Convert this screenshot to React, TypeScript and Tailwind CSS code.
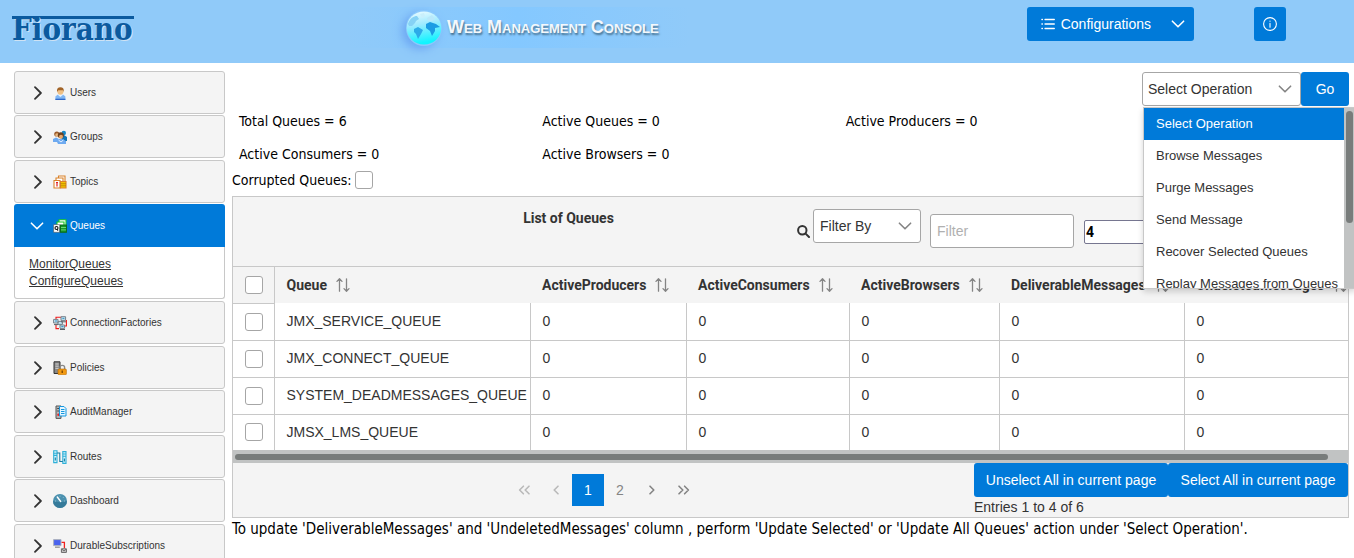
import React from "react";

type Glyph = { className?: string };

const ChevronDown = ({ className = "" }: Glyph) => (
  <svg viewBox="0 0 14 14" className={className} fill="none" stroke="currentColor" strokeWidth="1.6" strokeLinecap="round" strokeLinejoin="round" aria-hidden="true">
    <path d="M1.4 4.2 L7 9.8 L12.6 4.2" />
  </svg>
);

const ChevronRight = ({ className = "" }: Glyph) => (
  <svg viewBox="0 0 14 14" className={className} fill="none" stroke="currentColor" strokeWidth="1.8" strokeLinecap="round" strokeLinejoin="round" aria-hidden="true">
    <path d="M5 1.2 L10.9 7 L5 12.8" />
  </svg>
);

const ListIcon = () => (
  <svg viewBox="0 0 14 14" className="size-3.5" stroke="currentColor" strokeWidth="1.3" strokeLinecap="round" aria-hidden="true">
    <path d="M4 2.5H13.3M4 7H13.3M4 11.5H13.3M.9 2.5H1.4M.9 7H1.4M.9 11.5H1.4" />
  </svg>
);

const InfoIcon = () => (
  <svg viewBox="0 0 14 14" className="size-3.5" fill="none" stroke="currentColor" strokeWidth="1.1" strokeLinecap="round" aria-hidden="true">
    <circle cx="7" cy="7" r="6.4" />
    <path d="M7 6.4V10.2M7 4V4.2" />
  </svg>
);

const SortIcon = () => (
  <svg viewBox="0 0 14 14" className="size-3.5 shrink-0 text-[#848484]" fill="none" stroke="currentColor" strokeWidth="1.3" strokeLinecap="round" strokeLinejoin="round" aria-hidden="true">
    <path d="M3.5 13.2V.8M1 3.4L3.5 .8L6 3.4M10.5 .8V13.2M8 10.6L10.5 13.2L13 10.6" />
  </svg>
);

const SearchIcon = () => (
  <svg viewBox="0 0 13 13" className="size-[13px]" fill="none" stroke="#333" strokeWidth="2" strokeLinecap="round" aria-hidden="true">
    <circle cx="5.3" cy="5.3" r="4.2" />
    <path d="M8.6 8.6L12 12" />
  </svg>
);

const Angle = ({ double = false, flip = false }: { double?: boolean; flip?: boolean }) => (
  <svg viewBox="0 0 14 14" className={flip ? "size-3.5 rotate-180" : "size-3.5"} fill="none" stroke="currentColor" strokeWidth="1.6" strokeLinecap="round" strokeLinejoin="round" aria-hidden="true">
    <path d={double ? "M2 3.2L5.8 7L2 10.8M7.6 3.2L11.4 7L7.6 10.8" : "M5 3.2L8.8 7L5 10.8"} />
  </svg>
);

const Globe = () => (
  <svg viewBox="0 0 36 36" className="size-9 shrink-0" aria-hidden="true">
    <defs>
      <linearGradient id="sea" x1="0" y1="0" x2="0.2" y2="1">
        <stop offset="0" stopColor="#f2fdff" />
        <stop offset="0.45" stopColor="#9eeaff" />
        <stop offset="1" stopColor="#10f4ff" />
      </linearGradient>
    </defs>
    <ellipse cx="18" cy="18" rx="17.3" ry="16.5" fill="url(#sea)" />
    <path d="M2 14C4 8 8 6 11 6L13 9L10 11L9 13L6 16L3 16Z" fill="#86d2f5" />
    <path d="M8 19L12 17L17 20L15 24L12 29L10 24L8 22Z" fill="#2cabe8" />
    <path d="M20 14L24 12L30 14L34 17L29 18L29 21L26 26L24 21L20 18Z" fill="#1c9ce4" />
    <path d="M21 8L26 5L29 9L26 11L22 11Z" fill="#b9e8fa" />
    <path d="M14 4L18 3L19 6L16 8Z" fill="#c9effb" />
  </svg>
);

const UserIcon = () => (
  <g>
    <path d="M2.4 14V10.5L4.5 8.7H10.3L12.4 10.5V14Z" fill="#7fb6f4" />
    <path d="M2.4 12.7H12.4V14H2.4Z" fill="#2f68c8" />
    <path d="M5 9L7.4 11L9.8 9L9 8H5.8Z" fill="#e4f1ff" />
    <circle cx="7.4" cy="5.6" r="3.1" fill="#f0c084" />
    <path d="M4 6C3.7 2.6 5 1.2 7.4 1.2S11.2 2.6 10.8 6L10 4.2H5.3Z" fill="#a26428" />
  </g>
);
const GroupsIcon = () => (
  <g>
    <circle cx="10.8" cy="3" r="2.2" fill="#1587c8" />
    <path d="M8.5 10V6L11 5L14 7V11H10Z" fill="#1176b8" />
    <circle cx="3.8" cy="4" r="2.6" fill="#9a5a2a" />
    <circle cx="4" cy="5" r="1.8" fill="#eab981" />
    <circle cx="7.8" cy="5.2" r="3" fill="#6d421f" />
    <circle cx="8" cy="6.8" r="2" fill="#e8a86b" />
    <path d="M0 12V9L3 7.6L6 9L10 9.3L13 11V14H5L4 12Z" fill="#6eaaf0" />
    <path d="M5.5 10L8 12L10.4 10" stroke="#e0f0ff" fill="none" />
  </g>
);
const TopicsIcon = () => (
  <g fill="#fff" stroke="#d9822b" strokeWidth="1.1">
    <path d="M5.5 1H12V7H5.5Z" />
    <path d="M3 3H10V9H3Z" />
    <path d="M1 5.5H7V13H1Z" />
    <path d="M7.5 6.5H13V13H7.5Z" fill="#f5c400" />
    <path d="M7.5 8.7H13M7.5 10.8H13" stroke="#b07800" strokeWidth=".7" />
    <path d="M4 7V11.5M3 7.5H5" stroke="#e02020" strokeWidth="1.2" />
  </g>
);
const QueuesIcon = () => (
  <g fill="#fff" stroke="#14c821" strokeWidth="1.1">
    <path d="M6 .8H13V7H6Z" />
    <path d="M4 3H11V9H4Z" />
    <path d="M.6 5.6H6.6V13.3H.6Z" stroke="#555" strokeWidth=".6" />
    <path d="M7.4 6H13.4V13.3H7.4Z" fill="#15962a" stroke="#0b6c1a" />
    <path d="M8 8.5H13M8 10.9H13" stroke="#7be884" strokeWidth=".8" />
    <circle cx="3.5" cy="9" r="1.5" stroke="#111" />
    <path d="M4 10L5 11.6" stroke="#111" />
  </g>
);
const FactoriesIcon = () => (
  <g fill="#bfe3f2" stroke="#77818a" strokeWidth="1">
    <path d="M3 4V1.3H8M13.4 4V10H11M3 9V12.6H6" stroke="#f01818" fill="none" strokeWidth="1.1" />
    <path d="M.6 3.4H5V7H.6ZM8 .7H12.6V4.4H8ZM5 5.4H9.4V8.4H5ZM7 9H11.6V12.4H7Z" />
    <path d="M1 8.6H5M8 5.8H13M7 13.5H12" stroke="#596067" />
    <path d="M2 5H4M9.4 2.4H11.4M8.3 10.6H10.5" stroke="#3a8fc0" />
  </g>
);
const PoliciesIcon = () => (
  <g>
    <path d="M1 .8H7V12.5H1Z" fill="#888" stroke="#333" />
    <path d="M2.4 3H5.6M2.4 5.2H5.6M2.4 7.4H5.6" stroke="#ccc" />
    <path d="M7 9V6.5C7 3.6 11.6 3.6 11.6 6.5V9" fill="none" stroke="#888" strokeWidth="1.4" />
    <rect x="5" y="8" width="8.4" height="5.8" rx="1" fill="#f29a12" stroke="#b96a00" strokeWidth=".6" />
    <path d="M9.2 9.6V12" stroke="#6b3b00" strokeWidth="1.2" />
  </g>
);
const AuditIcon = () => (
  <g>
    <path d="M3 1H8V13.4H3Z" fill="#b8b8b8" stroke="#555" />
    <path d="M4.2 3.5H6.5M4.2 6H6.5" stroke="#444" />
    <circle cx="5.4" cy="9.8" r="1.2" fill="#f02020" />
    <path d="M6.5 1.5H11L13 3.5V11H6.5Z" fill="#e4f6ff" stroke="#1597e0" />
    <path d="M8 4.5H11.5M8 6.5H11.5M8 8.5H11.5" stroke="#1597e0" />
  </g>
);
const RoutesIcon = () => (
  <g fill="#d6f3fd" stroke="#2fb0d8" strokeWidth="1.1">
    <path d="M.7 .8H4V12.6H.7ZM9.8 1.6H13V13.4H9.8Z" />
    <path d="M.7 3.2H4M.7 5.4H4M9.8 4H13M9.8 6.2H13" />
    <path d="M4 3H6.8V11.5H9.8" fill="none" stroke="#187ea4" />
    <path d="M2.3 7.5V10.5M11.4 8.5V11.5" stroke="#187ea4" />
  </g>
);
const DashboardIcon = () => (
  <g>
    <circle cx="7" cy="7" r="7" fill="#4a90ae" />
    <path d="M0 7A7 7 0 0 0 14 7C10 8.5 4 8.5 0 7Z" fill="#357a9a" />
    <path d="M4.3 3L7.6 7.4" stroke="#fff" strokeWidth="1.5" strokeLinecap="round" />
    <path d="M2 7H2.6M7 1.8V2.4M10.4 3.4L10.1 3.8M11.5 7H12" stroke="#d7edf5" strokeWidth=".9" />
  </g>
);
const DurableIcon = () => (
  <g>
    <path d="M.6 .6H8V6.6H.6Z" fill="#4a63ee" stroke="#aab0bd" />
    <path d="M2 8.2H6.8" stroke="#999" strokeWidth="1.4" />
    <path d="M8.6 3.4H11.4V9" fill="none" stroke="#f02020" strokeWidth="1.3" />
    <path d="M8.4 9.8H13.4V13.4H8.4Z" fill="#ccc" stroke="#666" />
    <path d="M9 10.3L11 12L13 10.3" fill="none" stroke="#555" strokeWidth=".8" />
  </g>
);

const sections = [
  { name: "Users", Icon: UserIcon },
  { name: "Groups", Icon: GroupsIcon },
  { name: "Topics", Icon: TopicsIcon },
  { name: "Queues", Icon: QueuesIcon, links: ["MonitorQueues", "ConfigureQueues"] },
  { name: "ConnectionFactories", Icon: FactoriesIcon },
  { name: "Policies", Icon: PoliciesIcon },
  { name: "AuditManager", Icon: AuditIcon },
  { name: "Routes", Icon: RoutesIcon },
  { name: "Dashboard", Icon: DashboardIcon },
  { name: "DurableSubscriptions", Icon: DurableIcon },
];

const stats = ["Total Queues = 6", "Active Queues = 0", "Active Producers = 0", "Active Consumers = 0", "Active Browsers = 0"];

const operations = [
  "Select Operation",
  "Browse Messages",
  "Purge Messages",
  "Send Message",
  "Recover Selected Queues",
  "Replay Messages from Queues",
];

const columns = ["Queue", "ActiveProducers", "ActiveConsumers", "ActiveBrowsers", "DeliverableMessages", "UndeletedMessages"];
const queues = ["JMX_SERVICE_QUEUE", "JMX_CONNECT_QUEUE", "SYSTEM_DEADMESSAGES_QUEUE", "JMSX_LMS_QUEUE"];

const Tick = ({ label, id }: { label?: string; id?: string }) => (
  <input
    type="checkbox"
    id={id}
    aria-label={label}
    className="block size-[18px] shrink-0 appearance-none rounded-[3px] border border-[#a6a6a6] bg-white"
  />
);

function Sidebar() {
  return (
    <nav className="w-[211px] shrink-0 pt-2" aria-label="Sections">
      <ul>
        {sections.map(({ name, Icon, links }) => (
          <React.Fragment key={name}>
            <li className={links ? "" : "mb-px even:mb-0.5"}>
              <button
                type="button"
                className={
                  links
                    ? "flex h-[43px] w-full items-center rounded-t-[3px] bg-[#007ad9] pl-4 text-left text-white"
                    : "flex h-[43px] w-full items-center rounded-[3px] border border-[#c8c8c8] bg-[#f4f4f4] pl-[15px] text-left text-[#333]"
                }
              >
                {links ? <ChevronDown className="size-3.5" /> : <ChevronRight className="size-3.5" />}
                <svg viewBox="0 0 14 14" className="ml-[9px] mr-[3px] size-3.5" aria-hidden="true">
                  <Icon />
                </svg>
                <span className="text-[10px]">{name}</span>
              </button>
            </li>
            {links && (
              <li className="mb-0.5 flex h-[52px] flex-col items-start rounded-b-[3px] border border-t-0 border-[#c8c8c8] bg-white pl-3.5 pt-[9px]">
                {links.map((l) => (
                  <a key={l} href={"#" + l} className="text-[12px] leading-[17px] text-[#333] underline">
                    {l}
                  </a>
                ))}
              </li>
            )}
          </React.Fragment>
        ))}
      </ul>
    </nav>
  );
}

function Header() {
  return (
    <header className="flex h-[63px] items-start bg-[#90caf9] pt-[7px] pr-[68px]">
      <div className="w-[345px] pl-3 pt-[9px]">
        <div className="w-[122px] border-t-[3px] border-[#0b5a9f] font-['DejaVu_Serif_Condensed','DejaVu_Serif',serif] text-[31px] leading-[21px] font-bold text-[#0b5a9f] [text-shadow:1px_1px_0_#cfe2f3]">
          Fiorano
        </div>
      </div>
      <div className="flex h-[41px] w-[345px] items-center bg-linear-to-r from-[#90caf9] via-[#84c8ff] to-[#90caf9] pl-[61px]">
        <span className="rounded-full shadow-[-4px_3px_10px_#6ca6f2]">
          <Globe />
        </span>
        <h1 className="ml-[5px] whitespace-nowrap text-[18px] font-bold text-[#f4f8fb] [font-variant:small-caps] [text-shadow:1px_2px_2px_#47718f]">
          Web Management Console
        </h1>
      </div>
      <div className="ml-auto flex gap-[60px]">
        <div className="flex h-[34px] items-center rounded-[3px] bg-[#007ad9] text-white">
          <button type="button" className="flex h-full items-center gap-1.5 pl-3.5 pr-[11px]">
            <ListIcon />
            Configurations
          </button>
          <button type="button" aria-label="More configurations" className="flex h-full w-8 items-center justify-center">
            <ChevronDown className="size-3.5" />
          </button>
        </div>
        <button type="button" aria-label="Information" className="flex h-[34px] w-8 items-center justify-center rounded-[3px] bg-[#007ad9] text-white">
          <InfoIcon />
        </button>
      </div>
    </header>
  );
}

function OperationPicker() {
  return (
    <div className="relative flex w-[207px] shrink-0">
      <div className="relative h-[34px] flex-1">
        <select aria-label="Operation" className="h-full w-full appearance-none rounded-[3px] border border-[#a6a6a6] bg-white pl-[5px] text-[#333]">
          {operations.map((o) => (
            <option key={o}>{o}</option>
          ))}
        </select>
        <ChevronDown className="pointer-events-none absolute right-[9px] top-2.5 size-3.5 text-[#848484]" />
      </div>
      <button type="button" className="h-[34px] w-12 rounded-[3px] bg-[#007ad9] text-white">
        Go
      </button>
      <div className="absolute left-px top-[35px] z-10 flex h-[182px] w-[213px] border border-[#c8c8c8] bg-white shadow-[0_3px_6px_rgba(0,0,0,0.16)]">
        <ul role="listbox" aria-label="Operations" className="w-[200px] shrink-0 overflow-hidden text-[13px]">
          {operations.map((o, i) => (
            <li
              key={o}
              role="option"
              aria-selected={i === 0}
              className={
                i === 0
                  ? "h-8 whitespace-nowrap bg-[#007ad9] pl-3 leading-8 text-white"
                  : "h-8 whitespace-nowrap pl-3 leading-8 text-[#333]"
              }
            >
              {o}
            </li>
          ))}
        </ul>
        <div className="flex-1 bg-[#c1c3c3] px-0.5 pt-[3px]">
          <div className="h-[112px] w-[7px] rounded-full bg-[#787c7b]" />
        </div>
      </div>
    </div>
  );
}

function QueueTable() {
  return (
    <section className="border border-[#c8c8c8] bg-[#f4f4f4] text-[#333]">
      <div className="flex h-[70px] items-start border-b border-[#c8c8c8] font-bold">
        <h2 className="w-[564px] shrink-0 pl-[107px] pt-[13px] text-center font-['Roboto',sans-serif] leading-4">List of Queues</h2>
        <div className="flex items-start font-normal">
          <span className="mt-7 mr-[3px]">
            <SearchIcon />
          </span>
          <div className="relative mt-3 h-[34px] w-[108px]">
            <select aria-label="Filter by" className="h-full w-full appearance-none rounded-[3px] border border-[#a6a6a6] bg-white pl-1.5">
              <option>Filter By</option>
            </select>
            <ChevronDown className="pointer-events-none absolute right-[9px] top-2.5 size-3.5 text-[#848484]" />
          </div>
          <input
            aria-label="Filter"
            placeholder="Filter"
            className="mt-[17px] ml-[9px] h-[34px] w-36 rounded-[3px] border border-[#a6a6a6] bg-white px-1.5 placeholder:text-[#b0b0b0]"
          />
          <input
            aria-label="Rows per page"
            defaultValue="4"
            className="mt-[23px] ml-2.5 h-6 w-[140px] rounded-[2px] border border-[#767690] bg-white px-px font-['Roboto',sans-serif] text-[14px] font-bold text-black"
          />
        </div>
      </div>
      <div className="overflow-hidden">
        <table className="w-[1165px] table-fixed border-collapse">
          <colgroup>
            <col className="w-[41px]" />
            <col className="w-[256px]" />
            <col className="w-[156px]" />
            <col className="w-[163px]" />
            <col className="w-[150px]" />
            <col className="w-[185px]" />
            <col />
          </colgroup>
          <thead>
            <tr className="h-9">
              <th className="border-r border-b border-[#c8c8c8] pl-3">
                <Tick label="Select all rows" />
              </th>
              {columns.map((c) => (
                <th key={c} className="pl-3 text-left font-['Roboto',sans-serif] font-bold">
                  <span className="flex items-center gap-[9px]">
                    {c}
                    <SortIcon />
                  </span>
                </th>
              ))}
            </tr>
          </thead>
          <tbody>
            {queues.map((q) => (
              <tr key={q} className="h-[37px] border-b border-[#c8c8c8] bg-white last:h-9 last:border-b-0">
                <td className="border-r border-[#c8c8c8] pl-3">
                  <Tick label={"Select " + q} />
                </td>
                <td className="border-r border-[#c8c8c8] pl-3">{q}</td>
                {columns.slice(1).map((c) => (
                  <td key={c} className="border-r border-[#c8c8c8] pl-3 last:border-r-0">
                    0
                  </td>
                ))}
              </tr>
            ))}
          </tbody>
        </table>
        <div className="h-[13px] bg-[#c1c3c3] pt-1 pr-5 pl-0.5">
          <div className="h-1.5 rounded-full bg-[#787c7b]" />
        </div>
      </div>
      <div className="flex h-[54px]">
        <div className="flex flex-1 items-center pl-[275px] text-[#848484]">
          <button type="button" aria-label="First page" className="flex size-8 items-center justify-center text-[#b9b9b9]"><Angle double flip /></button>
          <button type="button" aria-label="Previous page" className="flex size-8 items-center justify-center text-[#b9b9b9]"><Angle flip /></button>
          <button type="button" className="size-8 bg-[#007ad9] text-white">1</button>
          <button type="button" className="size-8">2</button>
          <button type="button" aria-label="Next page" className="flex size-8 items-center justify-center"><Angle /></button>
          <button type="button" aria-label="Last page" className="flex size-8 items-center justify-center"><Angle double /></button>
        </div>
        <div className="w-[374px] shrink-0">
          <div className="flex">
            <button type="button" className="h-[34px] w-[194px] rounded-[3px] bg-[#007ad9] text-white">Unselect All in current page</button>
            <button type="button" className="h-[34px] flex-1 rounded-[3px] bg-[#007ad9] text-white">Select All in current page</button>
          </div>
          <p className="leading-5">Entries 1 to 4 of 6</p>
        </div>
      </div>
    </section>
  );
}

export default function App() {
  return (
    <div className="h-screen overflow-hidden bg-white font-['Liberation_Sans',Arial,sans-serif] text-[14px]">
      <Header />
      <div className="flex pl-3.5">
        <Sidebar />
        <main className="min-w-0 flex-1 pl-[7px] pr-[5px] pt-[9px]">
          <div className="flex">
            <ul className="grid flex-1 grid-cols-3 pt-[33px] font-['DejaVu_Sans_Condensed','DejaVu_Sans',sans-serif] text-black">
              {stats.map((s) => (
                <li key={s} className="h-[33px] pl-[7px] leading-[33px]">{s}</li>
              ))}
            </ul>
            <OperationPicker />
          </div>
          <div className="mb-[7px] flex h-[18px] items-center gap-1 font-['DejaVu_Sans_Condensed','DejaVu_Sans',sans-serif] text-black">
            <label htmlFor="corrupted">Corrupted Queues:</label>
            <Tick id="corrupted" />
          </div>
          <QueueTable />
          <p className="whitespace-nowrap font-['DejaVu_Sans_Condensed','DejaVu_Sans',sans-serif] text-[15px] leading-[22px] text-black">
            To update 'DeliverableMessages' and 'UndeletedMessages' column , perform 'Update Selected' or 'Update All Queues' action under 'Select Operation'.
          </p>
        </main>
      </div>
    </div>
  );
}
